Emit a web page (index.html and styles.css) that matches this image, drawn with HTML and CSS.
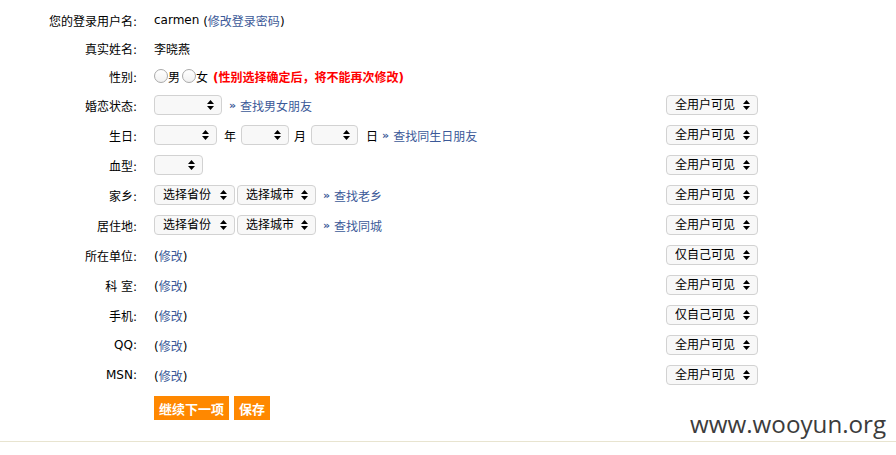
FILE: index.html
```html
<!DOCTYPE html>
<html lang="zh-CN">
<head>
<meta charset="utf-8">
<title>个人资料</title>
<link rel="stylesheet" href="styles.css">
</head>
<body>
<div class="form">
  <div class="row">
    <span class="label">您的登录用户名:</span>
    <div class="field">carmen <span class="paren">(<a href="#">修改登录密码</a>)</span></div>
  </div>
  <div class="row">
    <span class="label">真实姓名:</span>
    <div class="field">李晓燕</div>
  </div>
  <div class="row">
    <span class="label">性别:</span>
    <div class="field">
      <label class="radio"><input type="radio" name="sex">男</label>
      <label class="radio"><input type="radio" name="sex">女</label>
      <span class="warn">(性别选择确定后，将不能再次修改)</span>
    </div>
  </div>
  <div class="row tall">
    <span class="label">婚恋状态:</span>
    <div class="field">
      <select class="sel w68"><option></option></select>
      <a href="#" class="find"><span class="raquo">»</span>查找男女朋友</a>
    </div>
    <select class="sel vis"><option>全用户可见</option></select>
  </div>
  <div class="row tall">
    <span class="label">生日:</span>
    <div class="field">
      <select class="sel w63"><option></option></select>
      <span class="unit u-year">年</span>
      <select class="sel w48"><option></option></select>
      <span class="unit u-month">月</span>
      <select class="sel w47"><option></option></select>
      <span class="unit u-day">日</span>
      <a href="#" class="find near"><span class="raquo">»</span>查找同生日朋友</a>
    </div>
    <select class="sel vis"><option>全用户可见</option></select>
  </div>
  <div class="row tall">
    <span class="label">血型:</span>
    <div class="field">
      <select class="sel w49"><option></option></select>
    </div>
    <select class="sel vis"><option>全用户可见</option></select>
  </div>
  <div class="row tall">
    <span class="label">家乡:</span>
    <div class="field">
      <select class="sel w81"><option>选择省份</option></select>
      <select class="sel w79 next"><option>选择城市</option></select>
      <a href="#" class="find"><span class="raquo">»</span>查找老乡</a>
    </div>
    <select class="sel vis"><option>全用户可见</option></select>
  </div>
  <div class="row tall">
    <span class="label">居住地:</span>
    <div class="field">
      <select class="sel w81"><option>选择省份</option></select>
      <select class="sel w79 next"><option>选择城市</option></select>
      <a href="#" class="find"><span class="raquo">»</span>查找同城</a>
    </div>
    <select class="sel vis"><option>全用户可见</option></select>
  </div>
  <div class="row tall">
    <span class="label">所在单位:</span>
    <div class="field"><span class="paren">(<a href="#">修改</a>)</span></div>
    <select class="sel vis"><option>仅自己可见</option></select>
  </div>
  <div class="row tall">
    <span class="label">科 室:</span>
    <div class="field"><span class="paren">(<a href="#">修改</a>)</span></div>
    <select class="sel vis"><option>全用户可见</option></select>
  </div>
  <div class="row tall">
    <span class="label">手机:</span>
    <div class="field"><span class="paren">(<a href="#">修改</a>)</span></div>
    <select class="sel vis"><option>仅自己可见</option></select>
  </div>
  <div class="row tall">
    <span class="label">QQ:</span>
    <div class="field"><span class="paren">(<a href="#">修改</a>)</span></div>
    <select class="sel vis"><option>全用户可见</option></select>
  </div>
  <div class="row tall">
    <span class="label">MSN:</span>
    <div class="field"><span class="paren">(<a href="#">修改</a>)</span></div>
    <select class="sel vis"><option>全用户可见</option></select>
  </div>
  <div class="actions">
    <button class="btn" type="button">继续下一项</button>
    <button class="btn" type="button">保存</button>
  </div>
</div>
<div class="rule"></div>
<div class="watermark">www.wooyun.org</div>
</body>
</html>
```

FILE: styles.css
```css
html, body {
  margin: 0;
  padding: 0;
  background: #fff;
}
body {
  position: relative;
  width: 896px;
  height: 455px;
  overflow: hidden;
  font-family: "DejaVu Sans", "Noto Sans CJK SC", sans-serif;
  font-size: 12px;
  color: #000;
}
a {
  color: #3b5998;
  text-decoration: none;
}
.form {
  padding-top: 6px;
}
.row {
  display: grid;
  grid-template-columns: 137px 495px 92px;
  column-gap: 17px;
  align-items: center;
  height: 28px;
}
.row.tall {
  height: 30px;
}
.label {
  text-align: right;
  white-space: nowrap;
}
.field {
  display: flex;
  align-items: center;
  white-space: pre;
}
.paren {
  color: #000;
}
.radio {
  display: inline-flex;
  align-items: center;
}
.radio + .radio {
  margin-left: 2px;
}
.radio input {
  appearance: none;
  -webkit-appearance: none;
  width: 14px;
  height: 14px;
  margin: 0;
  border: 1px solid #a9a9a9;
  border-radius: 50%;
  background: linear-gradient(#ffffff, #f1f1f1);
  box-sizing: border-box;
}
.warn {
  color: #ff0000;
  font-weight: bold;
  margin-left: 5px;
}
.sel {
  appearance: none;
  -webkit-appearance: none;
  box-sizing: border-box;
  height: 20px;
  margin: 0;
  padding: 0 18px 0 8px;
  border: 1px solid #d2d2d2;
  border-radius: 4px;
  background-color: #f8f8f8;
  background-image: url("data:image/svg+xml;utf8,<svg xmlns='http://www.w3.org/2000/svg' width='7' height='10' viewBox='0 0 7 10'><path d='M3.5 0 L7 4 L0 4 Z M0 6 L7 6 L3.5 10 Z' fill='%23000'/></svg>");
  background-repeat: no-repeat;
  background-position: right 7px center;
  font-family: "DejaVu Sans", "Noto Sans CJK SC", sans-serif;
  font-size: 12px;
  color: #000;
}
.w68 { width: 68px; }
.w63 { width: 63px; }
.w48 { width: 48px; }
.w47 { width: 47px; }
.w49 { width: 49px; }
.w81 { width: 81px; }
.w79 { width: 79px; }
.next { margin-left: 2px; }
.vis { width: 92px; }
.unit.u-year { margin: 0 5px 0 7px; }
.unit.u-month { margin: 0 5px 0 5px; }
.unit.u-day { margin: 0 0 0 8px; }
.find {
  display: inline-flex;
  align-items: center;
  margin-left: 7px;
}
.find.near {
  margin-left: 4px;
}
.raquo {
  font-weight: bold;
  font-size: 11px;
  margin-right: 4px;
}
.actions {
  display: flex;
  gap: 5px;
  margin: 6px 0 0 154px;
}
.btn {
  height: 24px;
  padding: 0 5px;
  border: 0;
  border-radius: 0;
  background: #ff8800;
  color: #fff;
  font-family: "DejaVu Sans", "Noto Sans CJK SC", sans-serif;
  font-size: 13px;
  font-weight: bold;
}
.rule {
  margin-top: 21px;
  height: 0;
  border-top: 1px solid #e8e4d0;
}
.watermark {
  position: absolute;
  left: 690px;
  top: 408px;
  font-family: "Open Sans", sans-serif;
  font-size: 24.2px;
  color: #3c3c3c;
  line-height: 32px;
}
```
